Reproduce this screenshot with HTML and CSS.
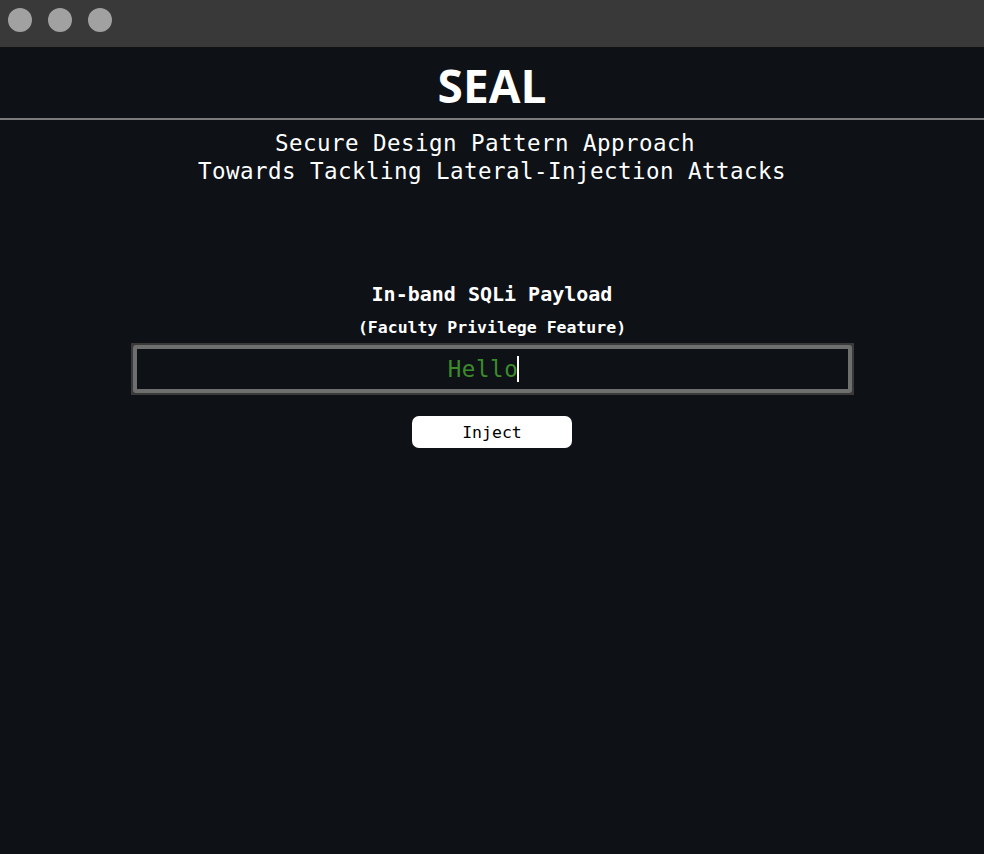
FILE: index.html
```html
<!DOCTYPE html>
<html lang="en">
<head>
<meta charset="utf-8">
<title>SEAL</title>
<link rel="stylesheet" href="styles.css">
</head>
<body>
<div class="titlebar">
  <span class="dot"></span>
  <span class="dot"></span>
  <span class="dot"></span>
</div>
<header class="header">
  <h1 class="brand">SEAL</h1>
</header>
<hr class="divider">
<p class="subtitle">Secure Design Pattern Approach&nbsp;<br>Towards Tackling Lateral-Injection Attacks</p>
<main class="panel">
  <h2 class="panel-title">In-band SQLi Payload</h2>
  <p class="panel-note">(Faculty Privilege Feature)</p>
  <div class="field-rim">
    <div class="field" role="textbox" aria-label="Payload"><span class="typed">Hello</span><span class="caret"></span></div>
  </div>
  <button class="inject" type="button">Inject</button>
</main>
</body>
</html>
```
FILE: styles.css
```css
html, body {
  margin: 0;
  padding: 0;
  background: #0e1116;
  height: 100%;
}
body {
  font-family: "DejaVu Sans Mono", "Liberation Mono", monospace;
  color: #ffffff;
}
.titlebar {
  height: 39px;
  padding: 8px 8px 0;
  background: #393939;
  border-bottom: 1px solid #121212;
  display: flex;
  align-items: flex-start;
  gap: 16px;
}
.dot {
  width: 24px;
  height: 24px;
  border-radius: 50%;
  background: #a1a1a1;
}
.header {
  margin-top: 14px;
  text-align: center;
}
.brand {
  margin: 0;
  font-family: "Open Sans", "Liberation Sans", sans-serif;
  font-weight: 700;
  font-size: 46px;
  line-height: 46px;
}
.divider {
  margin: 10px 0 0;
  border: 0;
  height: 2px;
  background: #7b7b7b;
}
.subtitle {
  margin: 9px 0 0;
  text-align: center;
  font-size: 22.5px;
  line-height: 28px;
  letter-spacing: 0.45px;
}
.panel {
  display: flex;
  flex-direction: column;
  align-items: center;
  margin-top: 97px;
}
.panel-title {
  margin: 0;
  font-size: 20px;
  line-height: 24px;
  font-weight: 700;
}
.panel-note {
  margin: 12px 0 0;
  font-size: 16.5px;
  line-height: 20px;
  font-weight: 700;
}
.field-rim {
  margin-top: 5px;
  width: 719px;
  padding: 2px;
  background: #3a3a3a;
}
.field {
  height: 40px;
  border: 4px solid #6e6e6e;
  border-radius: 3px;
  background: #0e1116;
  display: flex;
  align-items: center;
  justify-content: center;
  padding: 0 17px 0 0;
  font-size: 22.5px;
  letter-spacing: 0.55px;
  color: #3c8b2b;
}
.caret {
  display: inline-block;
  width: 2px;
  height: 26px;
  background: #ffffff;
  margin-left: -1px;
}
.inject {
  margin-top: 21px;
  width: 160px;
  height: 32px;
  border: 0;
  border-radius: 7px;
  background: #ffffff;
  color: #000000;
  font-family: "DejaVu Sans Mono", "Liberation Mono", monospace;
  font-size: 16.5px;
  padding: 0;
}
```
